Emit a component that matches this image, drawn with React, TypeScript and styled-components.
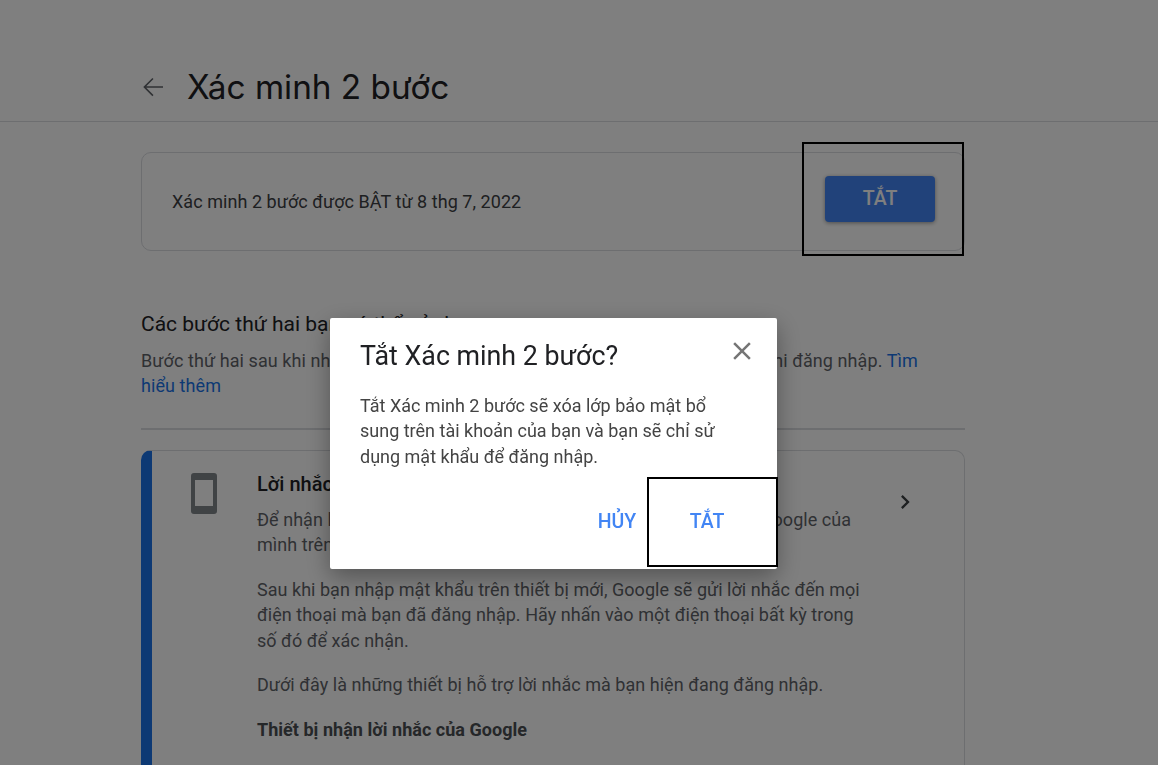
import React from "react";
import styled, { createGlobalStyle } from "styled-components";

const GlobalStyle = createGlobalStyle`
  html, body {
    margin: 0;
    padding: 0;
    height: 765px;
    overflow: hidden;
    background: #fff;
    font-family: Roboto, "Liberation Sans", sans-serif;
  }
`;

const Page = styled.div`
  width: 1158px;
  height: 765px;
  overflow: hidden;
`;

const Header = styled.header`
  display: flex;
  align-items: center;
  gap: 19px;
  height: 122px;
  box-sizing: border-box;
  padding: 70px 0 18px 138px;
  border-bottom: 1px solid #dadce0;
`;

const BackIcon = styled.svg`
  width: 30px;
  height: 30px;
  fill: #5f6368;
`;

const PageTitle = styled.h1`
  margin: 0;
  font-family: Inter, sans-serif;
  font-size: 33.3px;
  font-weight: 400;
  color: #202124;
`;

const Content = styled.main`
  width: 824px;
  margin-left: 141px;
  padding-top: 30px;
`;

const StatusCard = styled.section`
  display: flex;
  align-items: center;
  justify-content: space-between;
  height: 99px;
  box-sizing: border-box;
  padding: 0 29px 0 30px;
  border: 1px solid #dadce0;
  border-radius: 10px;
`;

const StatusText = styled.span`
  font-size: 18px;
  letter-spacing: 0.05px;
  color: #3c4043;
`;

const PrimaryButton = styled.button`
  width: 110px;
  height: 46px;
  margin-bottom: 6px;
  border: 0;
  border-radius: 4px;
  background: #4285f4;
  color: #fff;
  font-family: inherit;
  font-size: 19.5px;
  font-weight: 500;
  box-shadow: 0 1px 4px rgba(0, 0, 0, 0.4);
`;

const SectionTitle = styled.h2`
  margin: 60px 0 0;
  font-size: 21px;
  line-height: 26px;
  font-weight: 400;
  color: #202124;
`;

const SectionText = styled.p`
  max-width: 790px;
  margin: 11px 0 0;
  font-size: 18px;
  line-height: 25px;
  letter-spacing: 0.08px;
  color: #5f6368;
`;

const Link = styled.a`
  color: #1a73e8;
`;

const Divider = styled.hr`
  margin: 30px 0 0;
  height: 2px;
  border: 0;
  background: #dadce0;
`;

const OptionCard = styled.article`
  display: flex;
  margin-top: 20px;
  height: 400px;
  box-sizing: border-box;
  border: 1px solid #dadce0;
  border-left: 11px solid #1a73e8;
  border-radius: 10px;
`;

const OptionIconCell = styled.div`
  width: 105px;
  padding: 22px 0 0 39px;
  box-sizing: border-box;
`;

const PhoneIcon = styled.svg`
  display: block;
  width: 26px;
  height: 41px;
`;

const OptionBody = styled.div`
  width: 610px;
  padding-top: 19px;
`;

const OptionTitle = styled.h3`
  margin: 0 0 9px;
  font-size: 20px;
  line-height: 28px;
  font-weight: 500;
  color: #202124;
`;

const OptionText = styled.p`
  margin: 0 0 19.5px;
  font-size: 18px;
  line-height: 25.3px;
  letter-spacing: 0.03px;
  color: #5f6368;
`;

const OptionStrong = styled(OptionText)`
  font-weight: 700;
  color: #4a4e52;
`;

const ChevronIcon = styled.svg`
  width: 28px;
  height: 28px;
  margin: 37px 0 0 24px;
  fill: #3c4043;
`;

const Scrim = styled.div`
  position: fixed;
  inset: 0;
  background: rgba(0, 0, 0, 0.5);
`;

const Dialog = styled.div`
  position: fixed;
  left: 330px;
  top: 318px;
  width: 447px;
  height: 251px;
  box-sizing: border-box;
  padding: 21px 30px 0;
  background: #fff;
  border-radius: 2px;
  box-shadow: 0 8px 24px rgba(0, 0, 0, 0.35);
`;

const DialogHead = styled.div`
  display: flex;
  align-items: flex-start;
  justify-content: space-between;
`;

const DialogTitle = styled.h2`
  margin: 0;
  font-size: 26.8px;
  line-height: 34px;
  font-weight: 400;
  color: #202124;
`;

const CloseIcon = styled.svg`
  width: 30px;
  height: 30px;
  margin: -3px -10px 0 0;
  fill: #757575;
`;

const DialogText = styled.p`
  margin: 20px 0 0;
  font-size: 18px;
  line-height: 25.3px;
  color: #444;
`;

const DialogActions = styled.div`
  display: flex;
  justify-content: flex-end;
  margin: 8px -20px 0 0;
`;

const TextButton = styled.button<{ $width: number }>`
  width: ${(p) => p.$width}px;
  height: 89px;
  padding: 0;
  border: 0;
  background: none;
  color: #4285f4;
  font-family: inherit;
  font-size: 19.5px;
  font-weight: 500;
`;

const AnnotationBox = styled.div<{ $x: number; $y: number; $w: number; $h: number }>`
  position: fixed;
  left: ${(p) => p.$x}px;
  top: ${(p) => p.$y}px;
  width: ${(p) => p.$w}px;
  height: ${(p) => p.$h}px;
  box-sizing: border-box;
  border: 2px solid #000;
`;

export default function App() {
  return (
    <Page>
      <GlobalStyle />
      <Header>
        <BackIcon viewBox="0 0 24 24">
          <path d="M20 11.4H6.6l5.8-5.8-.9-.9L4.2 12l7.3 7.3.9-.9-5.8-5.8H20z" />
        </BackIcon>
        <PageTitle>Xác minh 2 bước</PageTitle>
      </Header>
      <Content>
        <StatusCard>
          <StatusText>Xác minh 2 bước được BẬT từ 8 thg 7, 2022</StatusText>
          <PrimaryButton>TẮT</PrimaryButton>
        </StatusCard>
        <SectionTitle>Các bước thứ hai bạn có thể sử dụng</SectionTitle>
        <SectionText>
          Bước thứ hai sau khi nhập mật khẩu của bạn sẽ giúp xác minh rằng đó là bạn khi đăng nhập. <Link>Tìm hiểu thêm</Link>
        </SectionText>
        <Divider />
        <OptionCard>
          <OptionIconCell>
            <PhoneIcon viewBox="0 0 26 41">
              <path
                fill="#80868b"
                fillRule="evenodd"
                d="M3 0h20a3 3 0 0 1 3 3v35a3 3 0 0 1-3 3H3a3 3 0 0 1-3-3V3a3 3 0 0 1 3-3zm1 7v26h18V7H4z"
              />
            </PhoneIcon>
          </OptionIconCell>
          <OptionBody>
            <OptionTitle>Lời nhắc của Google</OptionTitle>
            <OptionText>
              Để nhận lời nhắc đó bạn chỉ cần phải đăng nhập vào Tài khoản Google của mình trên điện thoại.
            </OptionText>
            <OptionText>
              Sau khi bạn nhập mật khẩu trên thiết bị mới, Google sẽ gửi lời nhắc đến mọi điện thoại mà bạn đã đăng nhập. Hãy nhấn vào một điện thoại bất kỳ trong số đó để xác nhận.
            </OptionText>
            <OptionText>Dưới đây là những thiết bị hỗ trợ lời nhắc mà bạn hiện đang đăng nhập.</OptionText>
            <OptionStrong>Thiết bị nhận lời nhắc của Google</OptionStrong>
          </OptionBody>
          <ChevronIcon viewBox="0 0 24 24">
            <path d="M8.6 16.6 13.2 12 8.6 7.4 10 6l6 6-6 6z" />
          </ChevronIcon>
        </OptionCard>
      </Content>
      <Scrim />
      <Dialog>
        <DialogHead>
          <DialogTitle>Tắt Xác minh 2 bước?</DialogTitle>
          <CloseIcon viewBox="0 0 24 24">
            <path d="M19 6.41 17.59 5 12 10.59 6.41 5 5 6.41 10.59 12 5 17.59 6.41 19 12 13.41 17.59 19 19 17.59 13.41 12z" />
          </CloseIcon>
        </DialogHead>
        <DialogText>
          Tắt Xác minh 2 bước sẽ xóa lớp bảo mật bổ sung trên tài khoản của bạn và bạn sẽ chỉ sử dụng mật khẩu để đăng nhập.
        </DialogText>
        <DialogActions>
          <TextButton $width={60}>HỦY</TextButton>
          <TextButton $width={120}>TẮT</TextButton>
        </DialogActions>
      </Dialog>
      <AnnotationBox $x={802} $y={142} $w={162} $h={114} />
      <AnnotationBox $x={647} $y={477} $w={131} $h={90} />
    </Page>
  );
}
